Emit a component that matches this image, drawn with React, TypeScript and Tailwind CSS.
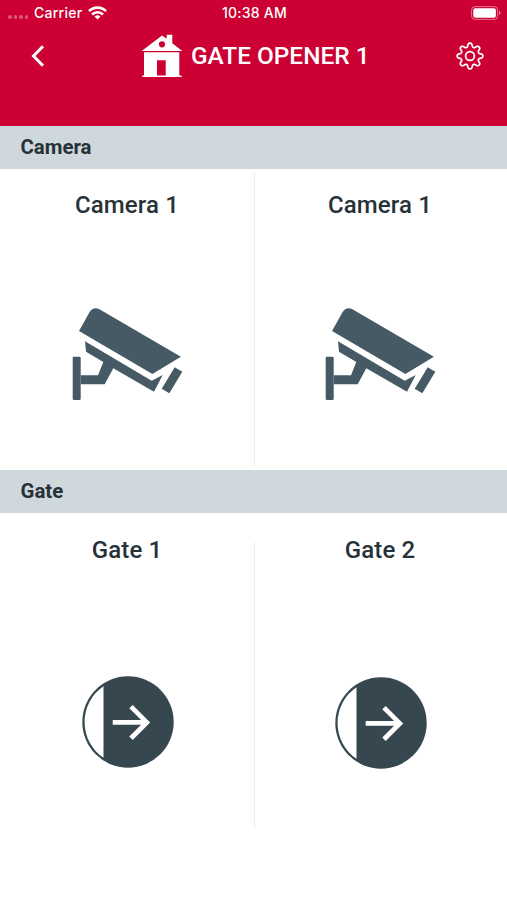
import type { ReactNode } from 'react';

const HouseIcon = () => (
    <svg width="42" height="44" viewBox="0 0 42 44" fill="#fff">
        <path fillRule="evenodd" d="M.7 17 21 1.6 25.7 4.8V.7h5.6v8.5L41.3 17Zm20.3-9.8a3.1 3.1 0 1 0 0 6.2 3.1 3.1 0 0 0 0-6.2Z" />
        <path d="M3 18.2h35.3v23.4h2.4V43H1.3v-1.4H3Zm13 8.1v15.2h8.7V26.3Z" fillRule="evenodd" />
    </svg>
);

const GearIcon = () => {
    const points: string[] = [];
    for (let i = 0; i < 192; i++) {
        const a = (i / 192) * Math.PI * 2;
        const r = 11 + 1.8 * Math.tanh(1.5 * Math.cos(8 * a)) / Math.tanh(1.5);
        points.push(`${(14 + r * Math.sin(a)).toFixed(2)},${(14 - r * Math.cos(a)).toFixed(2)}`);
    }
    return (
        <svg width="28" height="28" viewBox="0 0 28 28" fill="none" stroke="#fff" strokeWidth="1.75" strokeLinejoin="round">
            <polygon points={points.join(' ')} />
            <circle cx="14" cy="14" r="4.4" />
        </svg>
    );
};

const CameraIcon = () => (
    <svg width="111" height="93" viewBox="0 0 111 93" fill="#455a64">
        <path d="M7 23 17.5 4.2Q21-1.4 27 .9L108.9 48.7 80.4 66Z" />
        <path d="m13 33.3 66.7 39.4 11-5.7L82 83.7 41.3 60.3l-8.6 16H8.7v-9H26L31.3 54 14 43.7Z" />
        <rect x=".7" y="48.7" width="8" height="43.4" rx="1.3" />
        <path d="m102.7 59.3 7.6 4.4-13 21.6-7.6-4.6Z" />
    </svg>
);

const GateIcon = () => (
    <svg width="92" height="92" viewBox="0 0 92 92">
        <circle cx="46" cy="46" r="45.7" fill="#37474f" />
        <path d="M21.5 10.2a43.3 43.3 0 0 0 0 71.6Z" fill="#fff" />
        <path d="M30.7 46.4h34M49 30.6l15.8 15.8L49 62.2" fill="none" stroke="#fff" strokeWidth="4.8" />
    </svg>
);

const StatusBar = () => (
    <div className="grid h-[26px] grid-cols-3 items-center pr-1.5 pl-2 font-[Inter,sans-serif] text-[14px] font-medium tracking-[0.25px] text-white">
        <div className="flex items-center">
            <div className="mr-1 mt-2 flex w-[22px] gap-[2px] opacity-35">
                <i className="size-[3.5px] rounded-full bg-white" />
                <i className="size-[3.5px] rounded-full bg-white" />
                <i className="size-[3.5px] rounded-full bg-white" />
                <i className="size-[3.5px] rounded-full bg-white" />
            </div>
            <span className="pb-0.5">Carrier</span>
            <svg className="ml-1.5" width="19" height="14" viewBox="0 0 19 14" fill="none" stroke="#fff" strokeWidth="2.6">
                <path d="M1 5.1a12.1 12.1 0 0 1 17 0M4 8.5a7.9 7.9 0 0 1 11 0" />
                <path d="m9.5 13.6-3-3a4.3 4.3 0 0 1 6 0Z" fill="#fff" stroke="none" />
            </svg>
        </div>
        <span className="pb-0.5 text-center">10:38 AM</span>
        <svg className="ml-auto" width="30" height="14" viewBox="0 0 30 14">
            <rect x=".6" y=".6" width="26" height="12.8" rx="3.4" fill="none" stroke="#fff" strokeOpacity=".45" />
            <rect x="2.3" y="2.3" width="22.6" height="9.4" rx="2" fill="#fff" />
            <path d="M28 4.8q1.6.6 1.6 2.2T28 9.2Z" fill="#fff" fillOpacity=".5" />
        </svg>
    </div>
);

const Section = ({ title, children }: { title: string; children: ReactNode }) => (
    <section>
        <h2 className="flex h-[43px] items-center bg-[#cfd8dc] px-[20.5px] text-[20.4px] font-bold">{title}</h2>
        {children}
    </section>
);

const Tile = ({ name, className = '', children }: { name: string; className?: string; children: ReactNode }) => (
    <div className={`flex flex-col items-center ${className}`}>
        <h3 className="text-[24px] leading-[28px] font-medium tracking-[0.15px]">{name}</h3>
        {children}
    </div>
);

const App = () => {
    return (
        <div className="flex h-[900px] w-[507px] flex-col overflow-hidden bg-white font-[Roboto,sans-serif] text-[#263238]">
            <header className="h-[125.5px] bg-[#cc0033]">
                <StatusBar />
                <div className="flex h-[60px] items-center pr-[23px] pl-[30px] text-white">
                    <svg width="16" height="24" viewBox="0 0 16 24" fill="none" stroke="#fff" strokeWidth="3">
                        <path d="M13 2.3 3.5 12l9.5 9.7" />
                    </svg>
                    <div className="ml-[95px] flex items-center gap-2">
                        <HouseIcon />
                        <h1 className="text-[24.4px] font-medium">GATE OPENER 1</h1>
                    </div>
                    <div className="ml-auto"><GearIcon /></div>
                </div>
            </header>
            <Section title="Camera">
                <div className="flex h-[301.5px]">
                    <Tile name="Camera 1" className="w-[254px] pt-[22px]">
                        <div className="mt-[89px]"><CameraIcon /></div>
                    </Tile>
                    <div className="mt-[3px] mb-1 w-px bg-[#eceff1]" />
                    <Tile name="Camera 1" className="w-[250px] pt-[22px]">
                        <div className="mt-[89px] ml-px"><CameraIcon /></div>
                    </Tile>
                </div>
            </Section>
            <Section title="Gate">
                <div className="flex h-[316px]">
                    <Tile name="Gate 1" className="w-[254px] pt-[22.5px]">
                        <div className="mt-[112px] ml-[2px]"><GateIcon /></div>
                    </Tile>
                    <div className="mt-[29px] w-px bg-[#eceff1]" />
                    <Tile name="Gate 2" className="w-[250px] pt-[22.5px]">
                        <div className="mt-[113px] ml-px"><GateIcon /></div>
                    </Tile>
                </div>
            </Section>
        </div>
    );
};
export default App;
